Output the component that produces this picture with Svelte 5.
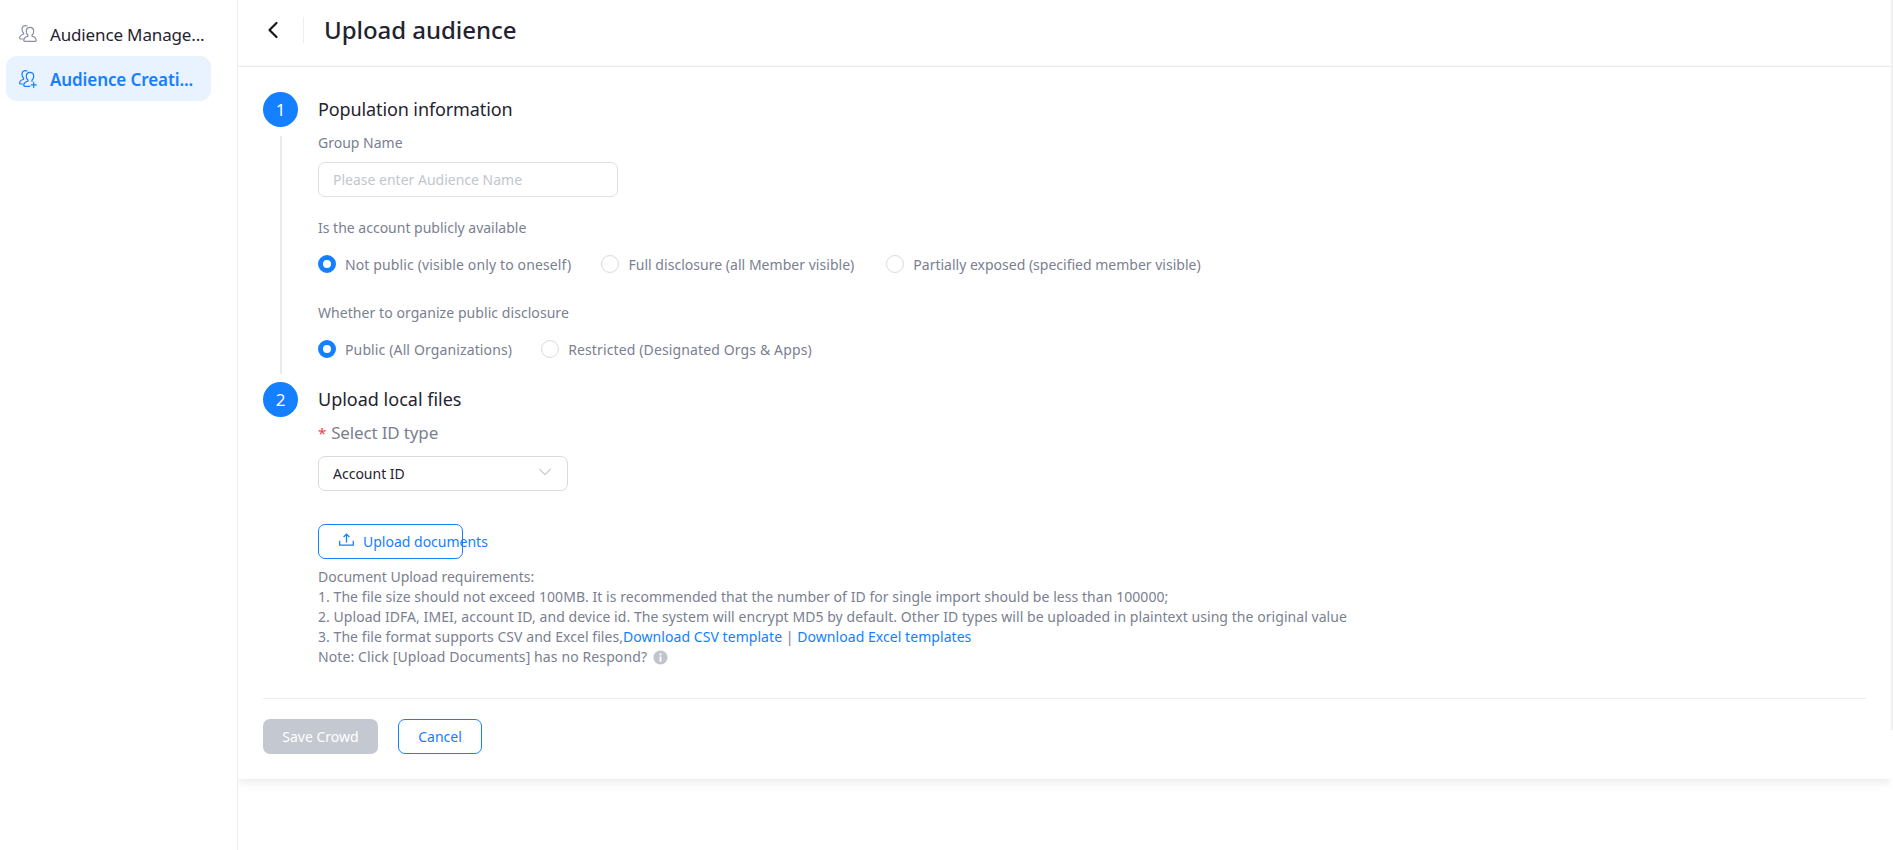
<script>
  const radios1 = [
    { label: 'Not public (visible only to oneself)', on: true },
    { label: 'Full disclosure (all Member visible)', on: false },
    { label: 'Partially exposed (specified member visible)', on: false }
  ];
  const radios2 = [
    { label: 'Public (All Organizations)', on: true },
    { label: 'Restricted (Designated Orgs & Apps)', on: false }
  ];
</script>

<div class="app">
  <aside class="side">
    <div class="item">
      <svg class="ico" viewBox="0 0 18 18" fill="none" stroke="#8a919f" stroke-width="1.200" stroke-linejoin="round" stroke-linecap="round">
        <path d="M8 1C7.500.7 7 .6 6.500.6 4.600.6 3 2.200 3 4.600 3 6 3.600 7.200 4.600 8v1.200C2.600 9.800.7 11 .6 13c0 .6.4 1 1 1H4" />
        <path d="M11 2.400c-2.200 0-3.700 1.800-3.700 4 0 1.500.7 2.800 1.700 3.500v1.300c-2.200.6-4 1.900-4.200 4-.1.6.3 1.100 1 1.100h10.400c.7 0 1.100-.5 1-1.100-.2-2.100-2-3.400-4.200-4V9.900c1-.7 1.700-2 1.700-3.500 0-2.200-1.500-4-3.700-4z" />
      </svg>
      <span class="item-text">Audience Manage...</span>
    </div>
    <div class="item active">
      <svg class="ico" viewBox="0 0 18 18" fill="none" stroke="#1480ff" stroke-width="1.200" stroke-linejoin="round" stroke-linecap="round">
        <path d="M8 1C7.500.7 7 .6 6.500.6 4.600.6 3 2.200 3 4.600 3 6 3.600 7.200 4.600 8v1.200C2.600 9.800.7 11 .6 13c0 .6.4 1 1 1H4" />
        <path d="M11 2.400c-2.200 0-3.700 1.800-3.700 4 0 1.500.7 2.800 1.700 3.500v1.300c-2.200.6-4 1.900-4.200 4-.1.6.3 1.100 1 1.100h5" />
        <path d="M11 2.400c2.200 0 3.700 1.800 3.700 4 0 1.500-.7 2.800-1.700 3.500v1.500" />
        <path d="M14.700 12.300v5.200M12.100 14.900h5.200" />
      </svg>
      <span class="item-text">Audience Creati...</span>
    </div>
  </aside>

  <main class="main">
    <header class="head">
      <svg class="back" viewBox="0 0 12 18" fill="none" stroke="#15181f" stroke-width="2.200" stroke-linecap="round" stroke-linejoin="round">
        <path d="M9.500 2 2.500 9l7 7" />
      </svg>
      <span class="head-sep"></span>
      <h1>Upload audience</h1>
    </header>

    <section class="card">
      <div class="step first">
        <div class="rail">
          <span class="num">1</span>
          <span class="line"></span>
        </div>
        <div class="body">
          <h2 class="tight">Population information</h2>
          <div class="label group-label">Group Name</div>
          <div class="input">Please enter Audience Name</div>
          <div class="label q1">Is the account publicly available</div>
          <div class="radios three">
            {#each radios1 as r}
              <div class="radio"><span class="dot" class:on={r.on}></span><span>{r.label}</span></div>
            {/each}
          </div>
          <div class="label q2">Whether to organize public disclosure</div>
          <div class="radios">
            {#each radios2 as r}
              <div class="radio"><span class="dot" class:on={r.on}></span><span>{r.label}</span></div>
            {/each}
          </div>
        </div>
      </div>

      <div class="step second">
        <div class="rail"><span class="num">2</span></div>
        <div class="body">
          <h2>Upload local files</h2>
          <div class="req"><span class="star">*</span>Select ID type</div>
          <div class="select">
            <span>Account ID</span>
            <svg viewBox="0 0 14 8" fill="none" stroke="#c3c7d0" stroke-width="1.100" stroke-linecap="round" stroke-linejoin="round"><path d="M1.500 1.200 7 6.600l5.500-5.400" /></svg>
          </div>
          <div class="upload">
            <svg viewBox="0 0 15 13" fill="none" stroke="#1480ff" stroke-width="1.300" stroke-linejoin="miter">
              <path d="M7.500 9.500V1.200M4.600 4 7.500 1.100 10.400 4" />
              <path d="M.7 7.800v4.400h13.600V7.800" />
            </svg>
            <span>Upload documents</span>
          </div>
          <div class="notes">
            <div class="plain">Document Upload requirements:</div>
            <div>1. The file size should not exceed 100MB. It is recommended that the number of ID for single import should be less than 100000;</div>
            <div>2. Upload IDFA, IMEI, account ID, and device id. The system will encrypt MD5 by default. Other ID types will be uploaded in plaintext using the original value</div>
            <div>3. The file format supports CSV and Excel files,<span class="link">Download CSV template</span> | <span class="link">Download Excel templates</span></div>
            <div class="note">Note: Click [Upload Documents] has no Respond?
              <svg viewBox="0 0 16 16"><circle cx="8" cy="8" r="7.500" fill="#bfc4cd" /><rect x="7" y="7" width="2" height="5.500" fill="#fff" /><rect x="7" y="3.700" width="2" height="2" fill="#fff" /></svg>
            </div>
          </div>
        </div>
      </div>

      <div class="actions">
        <div class="btn save">Save Crowd</div>
        <div class="btn cancel">Cancel</div>
      </div>
    </section>
  </main>
  <span class="edge"></span>
</div>

<style>
  :global(body) {
    margin: 0;
    background: #fff;
  }
  .app {
    display: flex;
    height: 850px;
    overflow: hidden;
    font-family: "Noto Sans", "Open Sans", sans-serif;
    font-size: 14px;
    color: #7a8090;
  }
  .edge {
    width: 2px;
    height: 730px;
    flex: none;
    background: #f0f0f1;
  }
  .side {
    box-sizing: border-box;
    width: 238px;
    flex: none;
    padding: 12px 26px 0 6px;
    border-right: 1px solid #eceef1;
    display: flex;
    flex-direction: column;
  }
  .item {
    height: 44px;
    display: flex;
    align-items: center;
    gap: 13px;
    padding-left: 13px;
    border-radius: 11px;
    font-size: 17px;
    letter-spacing: -0.15px;
    color: #1f2430;
    white-space: nowrap;
  }
  .item.active {
    height: 45px;
    background: #e9f2ff;
    color: #1480ff;
    font-weight: 600;
    letter-spacing: -0.1px;
    padding-top: 1px;
    box-sizing: border-box;
  }
  .ico {
    width: 18px;
    height: 18px;
    flex: none;
  }
  .main {
    flex: 1;
    min-width: 0;
    overflow: hidden;
    height: 850px;
  }
  .head {
    box-sizing: border-box;
    height: 67px;
    display: flex;
    align-items: center;
    padding: 0 0 6px 29px;
    border-bottom: 1px solid #eceef1;
  }
  .back {
    width: 12px;
    height: 18px;
    flex: none;
  }
  .head-sep {
    width: 1px;
    height: 26px;
    margin: 0 20px 0 24px;
    background: #eceef1;
  }
  h1 {
    margin: 0;
    font-size: 24px;
    font-weight: 500;
    letter-spacing: -0.05px;
    color: #1f2430;
    line-height: 32px;
  }
  .card {
    box-sizing: border-box;
    height: 712px;
    padding: 25px 25px 0 25px;
    box-shadow: 0 3px 9px rgba(0, 0, 0, 0.09);
    background: #fff;
  }
  .step {
    display: flex;
  }
  .step.first {
    height: 290px;
  }
  .step.second {
    height: 316px;
  }
  .rail {
    width: 55px;
    flex: none;
    display: flex;
    flex-direction: column;
    align-items: flex-start;
  }
  .num {
    width: 35px;
    height: 35px;
    border-radius: 50%;
    background: #1480ff;
    color: #fff;
    font-size: 17px;
    display: flex;
    align-items: center;
    justify-content: center;
  }
  .line {
    width: 2px;
    margin-left: 16.500px;
    margin-top: 9px;
    height: 238px;
    background: #e8eaee;
  }
  h2 {
    margin: 0;
    font-size: 18px;
    font-weight: 400;
    line-height: 35px;
    color: #1f2430;
  }
  h2.tight {
    letter-spacing: -0.11px;
  }
  .label {
    line-height: 20px;
  }
  .group-label {
    margin-top: 6px;
  }
  .input {
    box-sizing: border-box;
    width: 300px;
    height: 35px;
    margin-top: 9px;
    padding-left: 14px;
    line-height: 33px;
    border: 1px solid #dcdfe4;
    border-radius: 7px;
    color: #c2c6ce;
  }
  .q1 {
    margin-top: 21px;
  }
  .q2 {
    margin-top: 29px;
    letter-spacing: 0.06px;
  }
  .radios {
    display: flex;
    gap: 29px;
    margin-top: 16px;
    height: 20px;
    letter-spacing: 0.13px;
  }
  .three .radio:nth-child(1) {
    margin-right: 1px;
  }
  .three .radio:nth-child(2) {
    letter-spacing: 0.03px;
    margin-right: 3px;
  }
  .three .radio:nth-child(3) {
    letter-spacing: 0;
  }
  .radio {
    display: flex;
    align-items: center;
    gap: 9px;
    white-space: nowrap;
  }
  .dot {
    box-sizing: border-box;
    width: 18px;
    height: 18px;
    border-radius: 50%;
    border: 1px solid #d8dbe0;
    flex: none;
  }
  .dot.on {
    border: 5px solid #1480ff;
  }
  .req {
    font-size: 17px;
    letter-spacing: -0.15px;
    line-height: 24px;
    margin-top: 4px;
    color: #7a8090;
  }
  .star {
    color: #f5394a;
    margin-right: 5px;
    font-size: 15px;
  }
  .select {
    box-sizing: border-box;
    width: 250px;
    height: 35px;
    margin-top: 11px;
    padding: 0 15px 0 14px;
    display: flex;
    align-items: center;
    justify-content: space-between;
    border: 1px solid #d8dbe0;
    border-radius: 7px;
    color: #1f2430;
  }
  .select svg {
    width: 14px;
    height: 8px;
    margin-top: -3px;
  }
  .upload {
    box-sizing: border-box;
    width: 145px;
    height: 35px;
    margin-top: 33px;
    padding-left: 20px;
    display: flex;
    align-items: center;
    gap: 9px;
    border: 1px solid #1480ff;
    border-radius: 7px;
    color: #1480ff;
    white-space: nowrap;
  }
  .upload svg {
    width: 15px;
    height: 13px;
    flex: none;
    margin-top: -4px;
  }
  .notes {
    margin-top: 8px;
    line-height: 20px;
    white-space: nowrap;
    letter-spacing: 0.055px;
  }
  .plain {
    letter-spacing: 0;
  }
  .note {
    letter-spacing: 0.11px;
  }
  .note svg {
    width: 15px;
    height: 15px;
    vertical-align: -3px;
    margin-left: 2px;
  }
  .link {
    color: #1480ff;
  }
  .actions {
    padding-top: 20px;
    border-top: 1px solid #eceef1;
    display: flex;
    gap: 20px;
  }
  .btn {
    box-sizing: border-box;
    height: 35px;
    border-radius: 7px;
    display: flex;
    align-items: center;
    justify-content: center;
  }
  .save {
    width: 115px;
    background: #c4c8d1;
    color: #fff;
  }
  .cancel {
    width: 84px;
    border: 1px solid #1480ff;
    color: #1480ff;
  }
</style>
